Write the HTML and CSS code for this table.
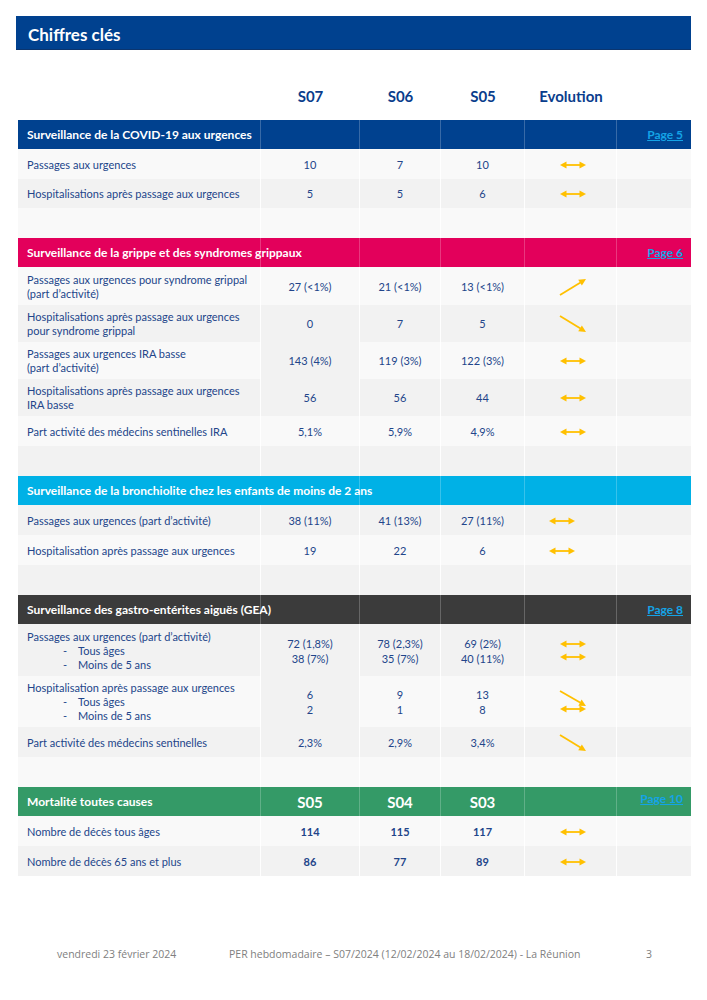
FILE: index.html
```html
<!DOCTYPE html>
<html lang="fr">
<head>
<meta charset="utf-8">
<title>Chiffres clés</title>
<link rel="stylesheet" href="styles.css">
</head>
<body>
<div class="page">
  <div class="title">Chiffres clés</div>

  <div class="colhead">
    <div></div><div>S07</div><div>S06</div><div>S05</div><div>Evolution</div><div></div>
  </div>

  <div class="tbl">
    <!-- COVID -->
    <div class="row hd blue">
      <div class="t">Surveillance de la COVID-19 aux urgences</div><div></div><div></div><div></div><div></div><div class="link"><a>Page 5</a></div>
    </div>
    <div class="row h30 lt">
      <div>Passages aux urgences</div><div>10</div><div>7</div><div>10</div><div class="ev"><svg class="hz" viewBox="0 0 26 8"><line x1="5" y1="4" x2="21" y2="4"/><polygon points="0,4 6.5,0.5 6.5,7.5"/><polygon points="26,4 19.5,0.5 19.5,7.5"/></svg></div><div></div>
    </div>
    <div class="row h29 gr">
      <div>Hospitalisations après passage aux urgences</div><div>5</div><div>5</div><div>6</div><div class="ev"><svg class="hz" viewBox="0 0 26 8"><line x1="5" y1="4" x2="21" y2="4"/><polygon points="0,4 6.5,0.5 6.5,7.5"/><polygon points="26,4 19.5,0.5 19.5,7.5"/></svg></div><div></div>
    </div>
    <div class="row h30 lt"><div></div><div></div><div></div><div></div><div></div><div></div></div>

    <!-- Grippe -->
    <div class="row hd pink">
      <div class="t">Surveillance de la grippe et des syndromes grippaux</div><div></div><div></div><div></div><div></div><div class="link"><a>Page 6</a></div>
    </div>
    <div class="row h38 lt">
      <div>Passages aux urgences pour syndrome grippal<br>(part d’activité)</div><div>27 (&lt;1%)</div><div>21 (&lt;1%)</div><div>13 (&lt;1%)</div>
      <div class="ev"><svg class="dg" viewBox="0 0 28 18"><line x1="1" y1="17" x2="21.5" y2="4.4"/><polygon points="27,1 22.9,7.6 19.2,1.7"/></svg></div><div></div>
    </div>
    <div class="row h37 gr">
      <div>Hospitalisations après passage aux urgences<br>pour syndrome grippal</div><div>0</div><div>7</div><div>5</div>
      <div class="ev"><svg class="dg" viewBox="0 0 28 18"><line x1="1" y1="1" x2="21.5" y2="13.6"/><polygon points="27,17 22.9,10.4 19.2,16.3"/></svg></div><div></div>
    </div>
    <div class="row h37 lt">
      <div>Passages aux urgences IRA basse<br>(part d’activité)</div><div class="cg">143 (4%)</div><div>119 (3%)</div><div>122 (3%)</div>
      <div class="ev"><svg class="hz" viewBox="0 0 26 8"><line x1="5" y1="4" x2="21" y2="4"/><polygon points="0,4 6.5,0.5 6.5,7.5"/><polygon points="26,4 19.5,0.5 19.5,7.5"/></svg></div><div></div>
    </div>
    <div class="row h37 gr">
      <div>Hospitalisations après passage aux urgences<br>IRA basse</div><div>56</div><div>56</div><div>44</div>
      <div class="ev"><svg class="hz" viewBox="0 0 26 8"><line x1="5" y1="4" x2="21" y2="4"/><polygon points="0,4 6.5,0.5 6.5,7.5"/><polygon points="26,4 19.5,0.5 19.5,7.5"/></svg></div><div></div>
    </div>
    <div class="row h30 lt">
      <div>Part activité des médecins sentinelles IRA</div><div>5,1%</div><div>5,9%</div><div>4,9%</div>
      <div class="ev"><svg class="hz" viewBox="0 0 26 8"><line x1="5" y1="4" x2="21" y2="4"/><polygon points="0,4 6.5,0.5 6.5,7.5"/><polygon points="26,4 19.5,0.5 19.5,7.5"/></svg></div><div></div>
    </div>
    <div class="row h30 gr"><div></div><div></div><div></div><div></div><div></div><div></div></div>

    <!-- Bronchiolite -->
    <div class="row hd cyan">
      <div class="t span2">Surveillance de la bronchiolite chez les enfants de moins de 2 ans</div><div></div><div></div><div></div><div></div>
    </div>
    <div class="row h30 gr">
      <div>Passages aux urgences (part d’activité)</div><div>38 (11%)</div><div>41 (13%)</div><div>27 (11%)</div>
      <div class="ev left"><svg class="hz" viewBox="0 0 26 8"><line x1="5" y1="4" x2="21" y2="4"/><polygon points="0,4 6.5,0.5 6.5,7.5"/><polygon points="26,4 19.5,0.5 19.5,7.5"/></svg></div><div></div>
    </div>
    <div class="row h30 lt">
      <div>Hospitalisation après passage aux urgences</div><div>19</div><div>22</div><div>6</div>
      <div class="ev left"><svg class="hz" viewBox="0 0 26 8"><line x1="5" y1="4" x2="21" y2="4"/><polygon points="0,4 6.5,0.5 6.5,7.5"/><polygon points="26,4 19.5,0.5 19.5,7.5"/></svg></div><div></div>
    </div>
    <div class="row h30 gr"><div></div><div></div><div></div><div></div><div></div><div></div></div>

    <!-- GEA -->
    <div class="row hd dark">
      <div class="t">Surveillance des gastro-entérites aiguës (GEA)</div><div></div><div></div><div></div><div></div><div class="link"><a>Page 8</a></div>
    </div>
    <div class="row h52 gr">
      <div class="ml">Passages aux urgences (part d’activité)<span class="sub"><i>-</i>Tous âges</span><span class="sub"><i>-</i>Moins de 5 ans</span></div>
      <div class="two">72 (1,8%)<br>38 (7%)</div><div class="two">78 (2,3%)<br>35 (7%)</div><div class="two">69 (2%)<br>40 (11%)</div>
      <div class="ev col"><svg class="hz" viewBox="0 0 26 8"><line x1="5" y1="4" x2="21" y2="4"/><polygon points="0,4 6.5,0.5 6.5,7.5"/><polygon points="26,4 19.5,0.5 19.5,7.5"/></svg><svg class="hz" viewBox="0 0 26 8"><line x1="5" y1="4" x2="21" y2="4"/><polygon points="0,4 6.5,0.5 6.5,7.5"/><polygon points="26,4 19.5,0.5 19.5,7.5"/></svg></div><div></div>
    </div>
    <div class="row h51 lt">
      <div class="ml">Hospitalisation après passage aux urgences<span class="sub"><i>-</i>Tous âges</span><span class="sub"><i>-</i>Moins de 5 ans</span></div>
      <div class="two cg">6<br>2</div><div class="two">9<br>1</div><div class="two">13<br>8</div>
      <div class="ev"><svg class="combo" viewBox="0 0 28 24"><line x1="1" y1="1" x2="21.5" y2="12.7"/><polygon points="27,16 22.6,9.6 19.4,15.7"/><line x1="6" y1="19" x2="22" y2="19"/><polygon points="1,19 7.5,15.5 7.5,22.5"/><polygon points="27,19 20.5,15.5 20.5,22.5"/></svg></div><div></div>
    </div>
    <div class="row h30 gr">
      <div>Part activité des médecins sentinelles</div><div>2,3%</div><div>2,9%</div><div>3,4%</div>
      <div class="ev"><svg class="dg" viewBox="0 0 28 18"><line x1="1" y1="1" x2="21.5" y2="13.6"/><polygon points="27,17 22.9,10.4 19.2,16.3"/></svg></div><div></div>
    </div>
    <div class="row h30 lt"><div></div><div></div><div></div><div></div><div></div><div></div></div>

    <!-- Mortalité -->
    <div class="row hd green">
      <div class="t">Mortalité toutes causes</div><div class="wk">S05</div><div class="wk">S04</div><div class="wk">S03</div><div></div><div class="link top"><a>Page 10</a></div>
    </div>
    <div class="row h30 lt">
      <div>Nombre de décès tous âges</div><div class="b">114</div><div class="b">115</div><div class="b">117</div>
      <div class="ev"><svg class="hz" viewBox="0 0 26 8"><line x1="5" y1="4" x2="21" y2="4"/><polygon points="0,4 6.5,0.5 6.5,7.5"/><polygon points="26,4 19.5,0.5 19.5,7.5"/></svg></div><div></div>
    </div>
    <div class="row h30 gr">
      <div>Nombre de décès 65 ans et plus</div><div class="b">86</div><div class="b">77</div><div class="b">89</div>
      <div class="ev"><svg class="hz" viewBox="0 0 26 8"><line x1="5" y1="4" x2="21" y2="4"/><polygon points="0,4 6.5,0.5 6.5,7.5"/><polygon points="26,4 19.5,0.5 19.5,7.5"/></svg></div><div></div>
    </div>
  </div>

  <div class="footer">
    <span class="f-date">vendredi 23 février 2024</span>
    <span class="f-mid">PER hebdomadaire – S07/2024 (12/02/2024 au 18/02/2024) - La Réunion</span>
    <span class="f-num">3</span>
  </div>
</div>
</body>
</html>
```

FILE: styles.css
```css
* { box-sizing: border-box; }

body {
  margin: 0;
  background: #ffffff;
  font-family: Lato, "Open Sans", sans-serif;
}

.page {
  width: 707px;
  height: 1000px;
  padding-top: 16px;
}

.title {
  margin-left: 16px;
  width: 675px;
  height: 34px;
  background: #00418f;
  border-bottom: 1px solid #0b356f;
  color: #ffffff;
  font-weight: 700;
  font-size: 17px;
  display: flex;
  align-items: center;
  padding: 3px 0 0 12px;
}

.colhead {
  margin: 34px 0 0 18px;
  width: 673px;
  height: 24px;
  display: grid;
  grid-template-columns: 243px 99px 81px 84px 92px 74px;
  color: #0a3d8c;
  font-weight: 700;
  font-size: 15px;
}
.colhead > div {
  display: flex;
  align-items: center;
  justify-content: center;
}

.tbl {
  margin: 12px 0 0 18px;
  width: 673px;
}

.row {
  display: grid;
  grid-template-columns: 243px 99px 81px 84px 92px 74px;
  color: #22458a;
  font-size: 11px;
}
.row > div {
  display: flex;
  align-items: center;
  justify-content: center;
  border-right: 1px solid rgba(255, 255, 255, 0.9);
  text-align: center;
  line-height: 14px;
  padding-top: 1px;
}
.row > div:first-child {
  justify-content: flex-start;
  text-align: left;
  padding-left: 9px;
}
.row > div:last-child { border-right: none; }

.h29 { height: 29px; }
.h30 { height: 30px; }
.h37 { height: 37px; }
.h38 { height: 38px; }
.h51 { height: 51px; }
.h52 { height: 52px; }

.lt { background: #f9f9f9; }
.gr { background: #f2f2f2; }
.lt .cg { background: #f2f2f2; }

.hd {
  height: 29px;
  color: #ffffff;
  font-weight: 700;
  font-size: 12px;
}
.hd > div { border-right: 1px solid rgba(255, 255, 255, 0.22); padding-top: 0; }
.hd .t { white-space: nowrap; }
.hd .span2 { grid-column: span 2; }
.blue { background: #00418f; }
.pink { background: #e3005b; }
.cyan { background: #00b1e6; }
.dark { background: #3b3b3b; }
.green { background: #349a67; }

.hd .link {
  justify-content: flex-end;
  padding-right: 8px;
  font-size: 12px;
}
.hd .link a {
  color: #14a3e6;
  text-decoration: underline;
}
.hd .link.top { align-items: flex-start; padding-top: 5px; }
.hd .wk { font-size: 15px; }

.row .b { font-weight: 700; }

.ml {
  flex-direction: column;
  align-items: flex-start !important;
  justify-content: center !important;
}
.sub { display: block; padding-left: 36px; }
.sub i { font-style: normal; display: inline-block; width: 15px; }

.two { line-height: 15px !important; }

.ev { padding-left: 4px; }
.ev.left { padding-left: 0; padding-right: 18px; }
.ev.col { flex-direction: column; gap: 5px; }

.ev svg line {
  stroke: #ffc000;
  stroke-width: 1.8;
}
.ev svg polygon { fill: #ffc000; }
.hz { width: 26px; height: 8px; }
.dg { width: 28px; height: 18px; }
.combo { width: 28px; height: 24px; }

.footer {
  margin-top: 71px;
  display: flex;
  color: #808080;
  font-size: 10.5px;
  line-height: 14px;
  font-family: "Open Sans", sans-serif;
}
.f-date { width: 229px; padding-left: 57px; }
.f-mid { width: 417px; }
```
